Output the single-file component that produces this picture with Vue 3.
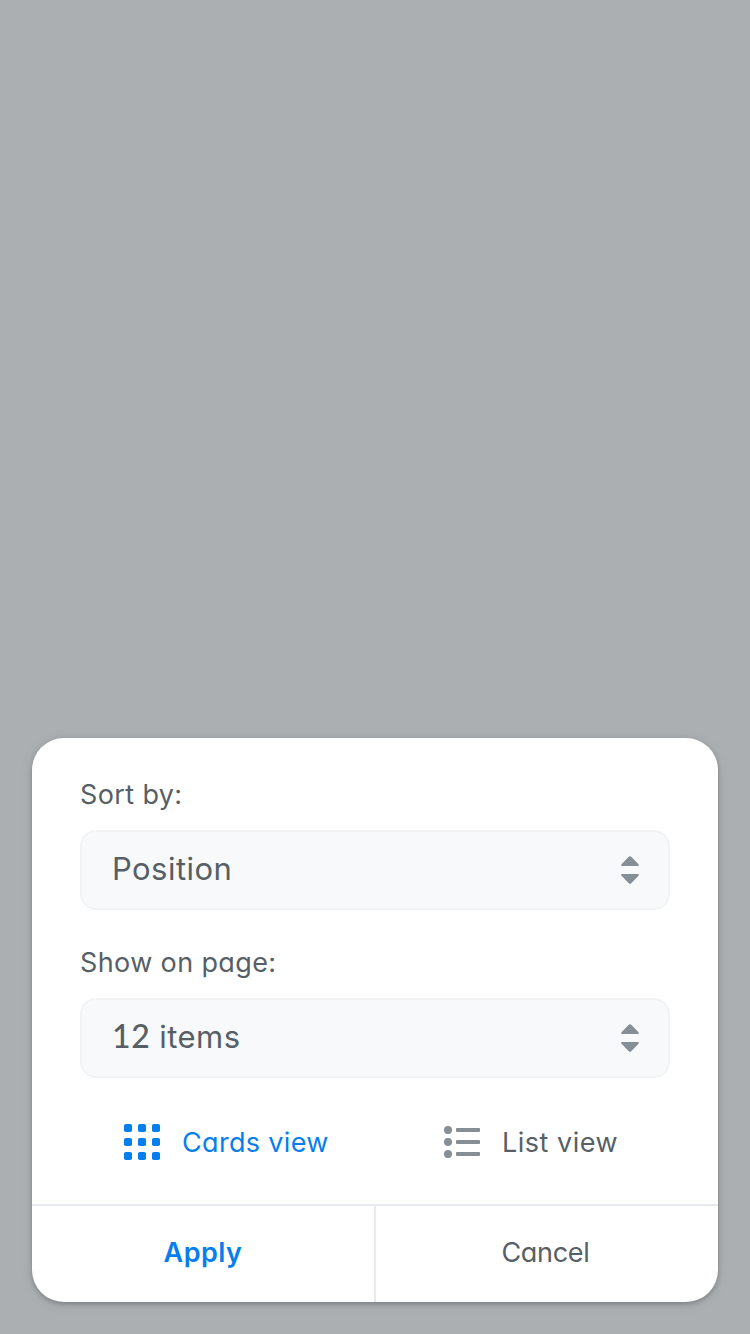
<script setup>
const fields = [
  { label: 'Sort by:', number: '', value: 'Position', name: 'sort' },
  { label: 'Show on page:', number: '12 ', value: 'items', name: 'count' },
]
const cells = [0, 14, 28]
const rows = [6, 18, 30]
</script>

<template>
  <main class="screen">
    <section class="sheet">
      <div class="body">
        <div v-for="f in fields" :key="f.name" class="field" :class="f.name">
          <div class="label"><span>{{ f.label }}</span></div>
          <div class="select">
            <span class="value"><span v-if="f.number" class="number">{{ f.number }}</span>{{ f.value }}</span>
            <svg class="arrows" width="18" height="28" viewBox="0 0 18 28">
              <path d="M8 .6Q9-.3 10 .6L17.5 8.2Q18.5 10 17 10H1Q-.5 10 .5 8.2ZM8 27.4Q9 28.3 10 27.4L17.5 19.8Q18.5 18 17 18H1Q-.5 18 .5 19.8Z" />
            </svg>
          </div>
        </div>
        <div class="views">
          <div class="view active">
            <svg width="36" height="36" viewBox="0 0 36 36">
              <template v-for="y in cells" :key="y">
                <rect v-for="x in cells" :key="x" :x="x" :y="y" width="8" height="8" rx="1.8" />
              </template>
            </svg>
            <span class="cards-text">Cards view</span>
          </div>
          <div class="view">
            <svg width="36" height="36" viewBox="0 0 36 36">
              <template v-for="y in rows" :key="y">
                <circle cx="4" :cy="y" r="4" />
                <rect x="12" :y="y - 2" width="24" height="4" rx=".8" />
              </template>
            </svg>
            <span class="list-text">List view</span>
          </div>
        </div>
      </div>
      <footer class="actions">
        <button class="apply"><span>Apply</span></button>
        <button class="cancel"><span>Cancel</span></button>
      </footer>
    </section>
  </main>
</template>

<style>
body { background: #abafb2; }
</style>

<style scoped>
.screen {
  box-sizing: border-box;
  height: 1334px;
  padding: 0 32px 32px;
  display: flex;
  flex-direction: column;
  justify-content: flex-end;
  background: #abafb2;
  color: #575f66;
  font: 400 27px/36px Inter, "Liberation Sans", sans-serif;
  font-feature-settings: "cv11", "ss03";
}
.sheet {
  box-sizing: border-box;
  height: 564px;
  border-radius: 32px;
  background: #fff;
  overflow: hidden;
  display: flex;
  flex-direction: column;
  box-shadow: 0 2px 5px rgba(0, 0, 0, .24), 0 2px 16px rgba(0, 0, 0, .05);
}
.body { flex: 1; padding: 39px 48px 0; }
.field { margin-bottom: 35px; }
.label { height: 36px; margin-bottom: 17px; white-space: nowrap; letter-spacing: .38px; }
.select {
  box-sizing: border-box;
  height: 80px;
  padding: 0 29px 0 30px;
  border: 2px solid #f1f3f5;
  border-radius: 16px;
  background: #f8f9fb;
  display: flex;
  align-items: center;
  justify-content: space-between;
}
.value { padding-bottom: 2px; font-size: 31px; line-height: 40px; letter-spacing: .45px; white-space: pre; }
.number { font: 500 32px/36px Lato, sans-serif; letter-spacing: .7px; }
.arrows { fill: #868e96; }
.views { display: flex; padding-left: 44px; margin-top: 46px; }
.view { width: 320px; flex: none; display: flex; align-items: center; gap: 22px; fill: #868e96; white-space: nowrap; letter-spacing: .33px; }
.view:last-child { width: auto; }
.view span { padding-top: 1px; margin-bottom: -1px; }
.list-text { letter-spacing: .5px; }
.active { color: #077eee; fill: #077eee; }
.actions { height: 98px; box-sizing: border-box; display: flex; border-top: 2px solid #e7ebef; }
button { border: 0; padding: 0 0 2px; background: none; color: inherit; font: inherit; font-feature-settings: "cv11", "ss03"; }
.apply { width: 342px; color: #077eee; font-weight: 600; letter-spacing: .5px; }
.cancel { flex: 1; padding-right: 3px; border-left: 2px solid #e7ebef; letter-spacing: -.3px; }
</style>
